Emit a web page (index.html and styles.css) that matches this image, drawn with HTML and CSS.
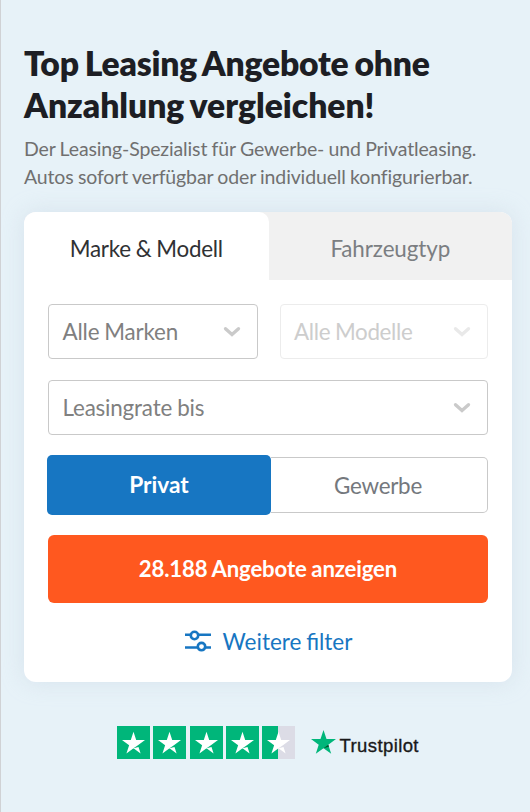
FILE: index.html
```html
<!DOCTYPE html>
<html lang="de">
<head>
<meta charset="utf-8">
<title>Top Leasing Angebote</title>
<link rel="stylesheet" href="styles.css">
</head>
<body>
<svg width="0" height="0" class="defs" aria-hidden="true">
  <symbol id="chevron" viewBox="0 0 18 12"><path d="M2.500 2.700 9 8.500l6.500-5.800" fill="none" stroke="currentColor" stroke-width="3.300" stroke-linecap="round"/></symbol>
  <symbol id="star" viewBox="0 0 33 33"><path d="M16.500 22.300l5-1.270 2.100 6.470zM28 14.100h-8.800L16.500 5.800l-2.700 8.300H5l7.130 5.100-2.700 8.260 7.100-5.100 4.400-3.100z" fill="#fff"/></symbol>
</svg>
<main class="page">
  <h1 class="title">Top Leasing Angebote ohne<br><span class="title-end">Anzahlung vergleichen!</span></h1>
  <p class="subtitle">Der Leasing-Spezialist für Gewerbe- und Privatleasing.<br>Autos sofort verfügbar oder individuell konfigurierbar.</p>

  <section class="card">
    <div class="tabs">
      <div class="tab tab-active">Marke &amp; Modell</div>
      <div class="tab">Fahrzeugtyp</div>
    </div>
    <div class="form">
      <div class="row">
        <div class="select"><span>Alle Marken</span><svg class="chevron"><use href="#chevron"/></svg></div>
        <div class="select select-disabled"><span>Alle Modelle</span><svg class="chevron"><use href="#chevron"/></svg></div>
      </div>
      <div class="select"><span>Leasingrate bis</span><svg class="chevron"><use href="#chevron"/></svg></div>
      <div class="toggle">
        <div class="option option-active">Privat</div>
        <div class="option option-idle">Gewerbe</div>
      </div>
      <div class="submit">28.188 Angebote anzeigen</div>
      <div class="more">
        <svg class="filter-icon" viewBox="0 0 26 22" fill="none" stroke="currentColor" stroke-width="2.600">
          <path d="M0 4.700h5.500M13.500 4.700H26M0 17.500h12.500M20.500 17.500H26"/>
          <circle cx="9.500" cy="5.500" r="3.700"/><circle cx="16.500" cy="16.600" r="3.700"/>
        </svg>
        <span>Weitere filter</span>
      </div>
    </div>
  </section>

  <div class="rating">
    <div class="stars">
      <svg class="star"><use href="#star"/></svg>
      <svg class="star"><use href="#star"/></svg>
      <svg class="star"><use href="#star"/></svg>
      <svg class="star"><use href="#star"/></svg>
      <svg class="star star-half"><use href="#star"/></svg>
    </div>
    <svg class="logo-star" viewBox="0 0 25 24">
      <path d="M12.500 0l3 9.100H25l-7.700 5.600 2.900 9.100-7.700-5.600-7.700 5.600 2.900-9.100L0 9.100h9.500z" fill="#00b67a"/>
      <path d="M17.900 16.700l-.6-2-4.800 3.500z" fill="#005128"/>
    </svg>
    <span class="logo-name">Trustpilot</span>
  </div>
</main>
</body>
</html>
```
FILE: styles.css
```css
* { box-sizing: border-box; }
body {
  margin: 0;
  background: #e7f2f8;
  font-family: Lato, "Liberation Sans", sans-serif;
  font-size: 22.400px;
  letter-spacing: -.18px;
  word-spacing: -.5px;
  font-variant-ligatures: common-ligatures;
}
.defs { position: absolute; }
.page {
  height: 812px;
  padding: 42px 18px 0 23px;
  border-left: 1px solid #d0d2d5;
  overflow: hidden;
}
.title {
  margin: 0;
  font-size: 33.700px;
  line-height: 42px;
  font-weight: 800;
  letter-spacing: -.22px;
  word-spacing: -1.700px;
  color: #1d1e24;
  white-space: nowrap;
}
.title-end { letter-spacing: -.04px; }
.subtitle {
  margin: 9px 0 0;
  font-size: 19.500px;
  line-height: 28px;
  letter-spacing: -.14px;
  word-spacing: -.5px;
  color: #707070;
  white-space: nowrap;
}
.card {
  height: 470px;
  margin-top: 21px;
  background: #fff;
  border-radius: 12px;
  box-shadow: 0 0 22px rgba(190, 205, 220, .4);
}
.tabs {
  display: flex;
  height: 68px;
  background: #f1f1f1;
  border-radius: 12px 12px 0 0;
  overflow: hidden;
}
.tab {
  flex: 1;
  display: flex;
  align-items: center;
  justify-content: center;
  padding-top: 4px;
  color: #7b7e82;
  letter-spacing: -.1px;
}
.tab-active {
  flex: none;
  width: 244.500px;
  background: #fff;
  color: #303134;
  letter-spacing: -.27px;
  padding-top: 5px;
  border-radius: 0 10px 0 0;
}
.form { padding: 24px 24px 0; }
.row { display: grid; grid-template-columns: 210px 208.500px; gap: 21.500px; margin-bottom: 21px; }
.select {
  height: 55px;
  display: flex;
  align-items: center;
  justify-content: space-between;
  padding: 0 16px 0 13.500px;
  border: 1px solid #c9c9c9;
  border-radius: 4px;
  color: #808080;
}
.select-disabled { border-color: #ececec; color: #cdcdcd; letter-spacing: -.35px; }
.chevron { width: 18px; height: 12px; margin-top: 1px; color: #cacaca; }
.select-disabled .chevron { color: #e9e9e9; }
.toggle { display: flex; align-items: center; height: 60px; margin: 20px 0 0 -1px; }
.option { display: flex; align-items: center; justify-content: center; }
.option-active {
  width: 224px;
  height: 60px;
  padding-bottom: 1px;
  border-radius: 5px;
  background: #1776c2;
  color: #fff;
  font-weight: 700;
  font-size: 22.700px;
  letter-spacing: 0;
}
.option-idle {
  flex: 1;
  height: 56px;
  padding: 0 2px 0 0;
  border: 1px solid #c9c9c9;
  border-left: 0;
  border-radius: 0 5px 5px 0;
  color: #74787d;
  letter-spacing: -.25px;
}
.submit {
  display: flex;
  align-items: center;
  justify-content: center;
  height: 68.500px;
  margin-top: 19.500px;
  border-radius: 6px;
  background: #ff581f;
  color: #fff;
  font-weight: 700;
  font-size: 22.200px;
  letter-spacing: -.16px;
}
.more {
  display: flex;
  align-items: center;
  justify-content: center;
  gap: 12px;
  margin: 24.500px 0 0 1px;
  color: #1776c2;
  font-size: 22.500px;
  letter-spacing: 0;
  word-spacing: -1px;
}
.filter-icon { width: 26px; height: 22px; }
.rating { display: flex; height: 33px; margin: 44px 0 0 93px; }
.stars { display: flex; gap: 3.250px; }
.star { width: 33px; height: 33px; background: #00b67a; }
.star-half { background: linear-gradient(90deg, #00b67a 50%, #dcdce6 50%); }
.logo-star { width: 25px; height: 24px; margin: 4px 0 0 16px; }
.logo-name {
  margin: 9px 0 0 3.500px;
  font: 18.500px/22px "Liberation Sans", Arial, sans-serif;
  letter-spacing: .4px;
  color: #191919;
  -webkit-text-stroke: .35px #191919;
}
```
